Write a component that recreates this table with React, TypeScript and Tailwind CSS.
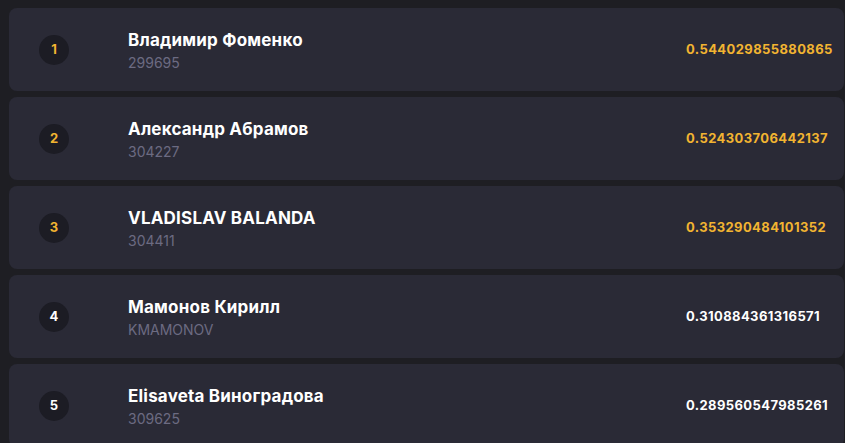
import React from "react";

const rows = [
  { rank: 1, name: "Владимир Фоменко", sub: "299695", score: "0.544029855880865", top: true },
  { rank: 2, name: "Александр Абрамов", sub: "304227", score: "0.524303706442137", top: true },
  { rank: 3, name: "VLADISLAV BALANDA", sub: "304411", score: "0.353290484101352", top: true },
  { rank: 4, name: "Мамонов Кирилл", sub: "KMAMONOV", score: "0.310884361316571", top: false },
  { rank: 5, name: "Elisaveta Виноградова", sub: "309625", score: "0.289560547985261", top: false },
];

export default function App() {
  return (
    <div
      className="w-[845px] h-[443px] overflow-hidden bg-[#1e1e23] pl-[9px] pr-[1px] pt-[8px] flex flex-col gap-[6px]"
      style={{ fontFamily: "Inter, 'Noto Sans', sans-serif" }}
    >
      {rows.map((r) => (
        <div
          key={r.rank}
          className="shrink-0 h-[83px] rounded-[8px] bg-[#2a2a36] flex items-center pl-[30px] pr-[11px]"
        >
          <div
            className={`w-[30px] h-[30px] rounded-full bg-[#1c1c24] flex items-center justify-center text-[13px] font-bold ${
              r.top ? "text-[#f2b431]" : "text-white"
            }`}
          >
            {r.rank}
          </div>
          <div className="ml-[59px] flex flex-col mt-[3px]">
            <div className="text-white text-[17px] font-bold leading-[20px] tracking-[0.2px]">{r.name}</div>
            <div className="text-[#6c6b82] text-[14px] leading-[18px] mt-[4px]">{r.sub}</div>
          </div>
          <div
            className={`ml-auto w-[147px] shrink-0 whitespace-nowrap text-[13px] font-bold tracking-[0.4px] ${
              r.top ? "text-[#f2b431]" : "text-white"
            }`}
          >
            {r.score}
          </div>
        </div>
      ))}
    </div>
  );
}
